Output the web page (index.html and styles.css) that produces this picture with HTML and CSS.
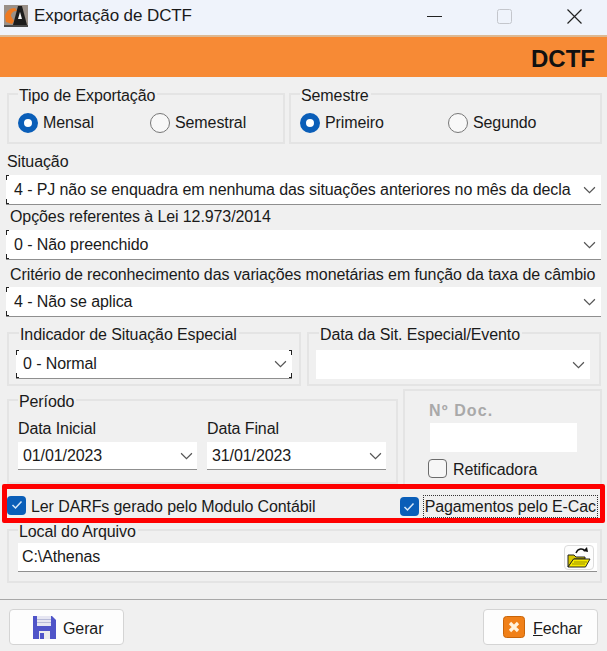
FILE: index.html
```html
<!DOCTYPE html>
<html lang="pt-BR">

<head>
    <meta charset="UTF-8">
    <meta name="viewport" content="width=device-width, initial-scale=1.0">
    <title>Exportação de DCTF</title>
    <link rel="stylesheet" href="styles.css">
</head>

<body>
    <div class="title-bar">
        <svg class="app-icon" width="24" height="22" viewBox="0 0 24 22">
            <rect x="0" y="0" width="24" height="22" fill="#9a9088"/>
            <path d="M1 11 C2 6 6 3 11 3 L13 6 C9 6 7 8 7 11 L10 16 L8 19 L2 17 Z" fill="#ee7a22"/>
            <path d="M9 20 L14 1 L18 1 L23 20 Z" fill="#1c1c1c"/>
            <path d="M14 14 L16 7 L18 14 Z" fill="#f5f5f5"/>
            <rect x="0" y="20" width="24" height="2" fill="#4a4a4a"/>
        </svg>
        <span class="window-title">Exportação de DCTF</span>
        <div class="window-buttons">
            <svg width="15" height="15" viewBox="0 0 15 15"><path d="M0 7.5 H15" stroke="#222" fill="none"/></svg>
            <svg width="15" height="15" viewBox="0 0 15 15"><rect x="0.5" y="0.5" width="14" height="14" rx="2" stroke="#c4c6cc" fill="none"/></svg>
            <svg width="15" height="15" viewBox="0 0 15 15"><path d="M0.5 0.5 L14.5 14.5 M14.5 0.5 L0.5 14.5" stroke="#222" stroke-width="1.2" fill="none"/></svg>
        </div>
    </div>

    <div class="orange-bar">DCTF</div>

    <div class="content">
        <div class="row top-row">
            <fieldset class="group tipo">
                <legend>Tipo de Exportação</legend>
                <div class="radios">
                    <span class="radio checked">Mensal</span>
                    <span class="radio">Semestral</span>
                </div>
            </fieldset>
            <fieldset class="group semestre">
                <legend>Semestre</legend>
                <div class="radios">
                    <span class="radio checked">Primeiro</span>
                    <span class="radio">Segundo</span>
                </div>
            </fieldset>
        </div>

        <div class="field-label first">Situação</div>
        <div class="select corners-left">
            <span>4 - PJ não se enquadra em nenhuma das situações anteriores no mês da decla</span>
            <svg class="chevron" viewBox="0 0 12 7"><path d="M1 1 L6 6 L11 1" /></svg>
        </div>
        <div class="field-label indent">Opções referentes à Lei 12.973/2014</div>
        <div class="select corners-left">
            <span>0 - Não preenchido</span>
            <svg class="chevron" viewBox="0 0 12 7"><path d="M1 1 L6 6 L11 1" /></svg>
        </div>
        <div class="field-label indent last">Critério de reconhecimento das variações monetárias em função da taxa de câmbio</div>
        <div class="select corners-left">
            <span>4 - Não se aplica</span>
            <svg class="chevron" viewBox="0 0 12 7"><path d="M1 1 L6 6 L11 1" /></svg>
        </div>

        <div class="row special-row">
            <fieldset class="group half">
                <legend>Indicador de Situação Especial</legend>
                <div class="select corners-all">
                    <span>0 - Normal</span>
                    <svg class="chevron" viewBox="0 0 12 7"><path d="M1 1 L6 6 L11 1" /></svg>
                </div>
            </fieldset>
            <fieldset class="group half">
                <legend>Data da Sit. Especial/Evento</legend>
                <div class="select no-line">
                    <span></span>
                    <svg class="chevron" viewBox="0 0 12 7"><path d="M1 1 L6 6 L11 1" /></svg>
                </div>
            </fieldset>
        </div>

        <div class="row period-row">
            <fieldset class="group periodo">
                <legend>Período</legend>
                <div class="dates">
                    <div class="date">
                        <div class="date-label">Data Inicial</div>
                        <div class="select">
                            <span>01/01/2023</span>
                            <svg class="chevron" viewBox="0 0 12 7"><path d="M1 1 L6 6 L11 1" /></svg>
                        </div>
                    </div>
                    <div class="date">
                        <div class="date-label">Data Final</div>
                        <div class="select">
                            <span>31/01/2023</span>
                            <svg class="chevron" viewBox="0 0 12 7"><path d="M1 1 L6 6 L11 1" /></svg>
                        </div>
                    </div>
                </div>
            </fieldset>
            <div class="doc-box">
                <div class="doc-label">Nº Doc.</div>
                <div class="doc-input"></div>
                <div class="retificadora"><span class="check-empty"></span><span class="low-text">Retificadora</span></div>
            </div>
        </div>

        <div class="red-box">
            <div class="check-item darfs">
                <span class="check">
                    <svg width="12" height="10" viewBox="0 0 12 10"><path d="M1.5 5 L4.5 8 L10.5 1.5" /></svg>
                </span>
                <span class="low-text">Ler DARFs gerado pelo Modulo Contábil</span>
            </div>
            <div class="check-item ecac">
                <span class="check">
                    <svg width="12" height="10" viewBox="0 0 12 10"><path d="M1.5 5 L4.5 8 L10.5 1.5" /></svg>
                </span>
                <span class="focused">Pagamentos pelo E-Cac</span>
            </div>
        </div>

        <fieldset class="group local">
            <legend>Local do Arquivo</legend>
            <div class="select path-input">
                <span>C:\Athenas</span>
                <div class="folder-btn">
                    <svg width="24" height="21" viewBox="0 0 24 21">
                        <path d="M9 6 C11 1 16 1 18 4" stroke="#111" stroke-width="1.4" fill="none"/>
                        <path d="M16 4 L21 5 L20 0 Z" fill="#111"/>
                        <path d="M1 8 H7 L9 10 H18 V12 H7 L1 20 Z" fill="#d8c800" stroke="#222"/>
                        <path d="M6.5 12 H23 L18.5 20 H1 Z" fill="#f6ea00" stroke="#222"/>
                        <path d="M7 15 H20 M5 17 H18" stroke="#9a9000" fill="none"/>
                    </svg>
                </div>
            </div>
        </fieldset>
    </div>

    <div class="footer">
        <button class="btn gerar">
            <svg width="23" height="24" viewBox="0 0 23 24">
                <path d="M0 1 H19 L23 5 V24 H0 Z" fill="#4f54c8"/>
                <rect x="4" y="1" width="14" height="10" fill="#e6e6f2"/>
                <rect x="4" y="4" width="14" height="1" fill="#b8bbd8"/>
                <rect x="4" y="7" width="14" height="1" fill="#b8bbd8"/>
                <rect x="6" y="16" width="11" height="8" fill="#ececec"/>
                <rect x="7" y="18" width="4" height="6" fill="#4f54c8"/>
            </svg>
            <span class="low-text">Gerar</span>
        </button>
        <button class="btn fechar">
            <svg width="22" height="22" viewBox="0 0 22 22">
                <rect x="0.5" y="0.5" width="21" height="21" rx="3" fill="#f08018" stroke="#c86408"/>
                <path d="M7 7 L15 15 M15 7 L7 15" stroke="#fff2dc" stroke-width="3.2" fill="none"/>
            </svg>
            <span class="low-text"><u>F</u>echar</span>
        </button>
    </div>
</body>

</html>
```

FILE: styles.css
```css
/* Reset */
*,
*::before {
    margin: 0;
    padding: 0;
    box-sizing: border-box;
    font-family: "Liberation Sans", Arial, sans-serif;
}

body {
    width: 607px;
    height: 651px;
    overflow: hidden;
    background-color: #f0f0f0;
    color: #1a1a1a;
    font-size: 16px;
    letter-spacing: -0.1px;
}

.title-bar {
    height: 35px;
    display: flex;
    align-items: center;
    padding: 0 0 3px 4px;
    background-color: #eff3fb;
}

.app-icon {
    margin-right: 6px;
}

.window-title {
    font-size: 17px;
}

.window-buttons {
    margin-left: auto;
    display: flex;
    gap: 55px;
    padding-right: 25px;
}

.orange-bar {
    height: 42px;
    display: flex;
    align-items: center;
    justify-content: flex-end;
    padding: 4px 12px 0 0;
    background-color: #f78a35;
    border-top: 2px solid #dcb994;
    color: #111;
    font-size: 24px;
    font-weight: bold;
    letter-spacing: 0;
}

.content {
    padding: 8px 5px 0 6px;
    height: 523px;
    border-bottom: 1px solid #a8a8a8;
}

.row {
    display: flex;
}

.group {
    border: 2px solid #e4e4e4;
    padding: 0 9px;
    min-width: 0;
}

.group legend {
    padding: 0 2px 0 1px;
    height: 18px;
    line-height: 22px;
}

.top-row {
    gap: 4px;
    padding-left: 1px;
}

.tipo {
    width: 278px;
    height: 59px;
}

.semestre {
    width: 313px;
    height: 59px;
}

.radios {
    display: flex;
    margin-top: 9px;
}

.radio {
    display: flex;
    align-items: center;
    gap: 5px;
    line-height: 22px;
}

.radio::before {
    content: "";
    width: 20px;
    height: 20px;
    border-radius: 50%;
    border: 1.5px solid #777;
    background-color: #f8f8f8;
}

.radio.checked::before {
    border: 6px solid #0a5eb8;
    background-color: #fff;
}

.tipo .radio:first-child {
    width: 132px;
}

.semestre .radio:first-child {
    width: 148px;
}

.field-label {
    line-height: 18px;
    padding-left: 1px;
    white-space: nowrap;
}

.field-label.first {
    margin-top: 9px;
    margin-bottom: 4px;
}

.field-label.indent {
    padding-left: 4px;
    margin-top: 3px;
    margin-bottom: 4px;
}

.field-label.last {
    margin-top: 6px;
    margin-bottom: 3px;
}

.select {
    height: 28px;
    display: flex;
    align-items: center;
    justify-content: space-between;
    padding: 0 4px 0 5px;
    background-color: #fff;
    border-bottom: 1px solid #8f8f8f;
    white-space: nowrap;
    overflow: hidden;
}

.content > .select {
    width: 595px;
    height: 30px;
    padding: 0 5px 0 8px;
}

.select.no-line {
    border-bottom: 0;
}

.corners-left {
    background-image:
        linear-gradient(#222, #222), linear-gradient(#222, #222),
        linear-gradient(#222, #222), linear-gradient(#222, #222);
    background-size: 1px 5px, 3px 1px, 1px 5px, 3px 1px;
    background-position: 0 0, 0 0, 0 100%, 0 100%;
    background-repeat: no-repeat;
}

.corners-all {
    background-image:
        linear-gradient(#222, #222), linear-gradient(#222, #222),
        linear-gradient(#222, #222), linear-gradient(#222, #222),
        linear-gradient(#222, #222), linear-gradient(#222, #222),
        linear-gradient(#222, #222), linear-gradient(#222, #222);
    background-size: 1px 5px, 3px 1px, 1px 5px, 3px 1px, 1px 5px, 3px 1px, 1px 5px, 3px 1px;
    background-position: 0 0, 0 0, 0 100%, 0 100%, 100% 0, 100% 0, 100% 100%, 100% 100%;
    background-repeat: no-repeat;
}

.chevron {
    width: 13px;
    height: 8px;
    flex-shrink: 0;
    margin-left: 4px;
}

.chevron path {
    fill: none;
    stroke: #555;
    stroke-width: 1.1;
}

.special-row {
    gap: 6px;
    margin-top: 7px;
    padding-left: 1px;
}

.group.half {
    width: 294px;
    height: 62px;
    padding: 0 7px;
}

.group.half + .group.half {
    padding-right: 9px;
}

.half legend {
    margin-left: 3px;
}

.half .select {
    height: 29px;
    margin-top: 8px;
    padding: 0 5px 0 7px;
}

.period-row {
    gap: 5px;
    margin-top: 3px;
    padding-left: 1px;
}

.periodo {
    width: 391px;
    height: 93px;
    align-self: flex-end;
}

.dates {
    display: flex;
    gap: 10px;
    margin-top: 10px;
}

.date {
    width: 179px;
}

.date-label {
    line-height: 19px;
    margin-bottom: 4px;
}

.doc-box {
    width: 199px;
    height: 95px;
    border: 2px solid #e4e4e4;
    border-bottom: 0;
    padding: 11px 0 0 25px;
}

.doc-label {
    font-weight: bold;
    color: #a9a9a9;
    line-height: 18px;
    letter-spacing: 1.1px;
    margin-left: -1px;
}

.doc-input {
    width: 147px;
    height: 29px;
    margin-top: 3px;
    background-color: #fff;
}

.retificadora {
    display: flex;
    align-items: center;
    gap: 6px;
    margin-top: 5px;
    margin-left: -2px;
    line-height: 20px;
}

.check-empty {
    width: 19px;
    height: 19px;
    border: 1.5px solid #6b6b6b;
    border-radius: 4px;
    background-color: #f6f6f6;
}

.low-text {
    padding-top: 3px;
}

.red-box {
    height: 39px;
    margin: 0 -3px 0 -4px;
    display: flex;
    justify-content: space-between;
    border: 5px solid #fe0000;
    border-radius: 2px;
    padding: 0 2px 0 0;
    white-space: nowrap;
}

.check-item {
    display: flex;
    align-items: center;
}

.check-item.darfs {
    gap: 5px;
    padding-top: 3px;
}

.check-item.ecac {
    gap: 4px;
    align-self: flex-end;
}

.check {
    width: 19px;
    height: 19px;
    display: flex;
    align-items: center;
    justify-content: center;
    border-radius: 4px;
    background-color: #0a5eb8;
}

.check svg path {
    fill: none;
    stroke: #d8e8f8;
    stroke-width: 1.5;
}

.focused {
    border: 1px dotted #333;
    padding: 1px 1px 0;
    line-height: 20px;
}

.group.local {
    width: 595px;
    height: 62px;
    margin: -2px 0 0 1px;
    padding: 0 3px 0 9px;
}

.select.path-input {
    height: 29px;
    margin-top: 4px;
    padding: 0 3px 0 4px;
}

.folder-btn {
    width: 30px;
    height: 25px;
    display: flex;
    align-items: center;
    justify-content: center;
    border: 1px solid #dcdcdc;
    border-radius: 4px;
    background-color: #fdfdfd;
}

.footer {
    height: 51px;
    display: flex;
    justify-content: space-between;
    padding: 9px 9px 0 9px;
}

.btn {
    width: 115px;
    height: 36px;
    display: flex;
    align-items: center;
    border: 1px solid #d4d4d4;
    border-radius: 4px;
    background-color: #fdfdfd;
    color: #1a1a1a;
    font-size: 16px;
    letter-spacing: -0.1px;
}

.btn.gerar {
    gap: 7px;
    padding-left: 23px;
}

.btn.fechar {
    gap: 8px;
    padding-left: 19px;
}
```
